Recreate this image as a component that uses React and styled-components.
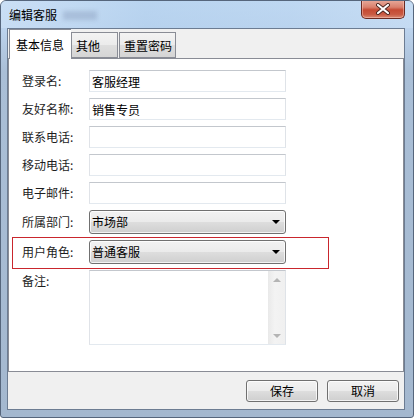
import React from 'react'
import styled, { createGlobalStyle } from 'styled-components'

const GlobalStyle = createGlobalStyle`
    html, body {
        margin: 0;
        padding: 0;
        background: #ffffff;
    }
    body {
        font-family: "Noto Sans CJK SC", "Microsoft YaHei", sans-serif;
        font-size: 12px;
        color: #1b1b1b;
    }
`

const Window = styled.div`
    width: 414px;
    height: 418px;
    box-sizing: border-box;
    border: 1px solid #56667c;
    border-radius: 6px 6px 3px 3px;
    background: linear-gradient(to bottom, #c4dbf3 0, #bcd3ed 28px, #aabfd7 70px, #a4b8cf 100%);
    display: flex;
    flex-direction: column;
    overflow: hidden;
`

const TitleBar = styled.div`
    height: 27px;
    flex: none;
    display: flex;
    align-items: center;
    padding-left: 8px;
    background: linear-gradient(to right, rgba(205,225,246,.7), rgba(178,208,238,.6) 35%, rgba(184,212,240,.5) 70%, rgba(200,222,245,.7));
`

const Title = styled.span`
    color: #000;
    font-size: 12px;
    line-height: 16px;
    letter-spacing: 0;
`

const Blurred = styled.span`
    width: 34px;
    height: 9px;
    margin-left: 6px;
    margin-top: 2px;
    background: rgba(140, 160, 190, .45);
    filter: blur(2px);
`

const CloseButton = styled.div`
    align-self: flex-start;
    margin: -1px 8px 0 auto;
    width: 44px;
    height: 19px;
    box-sizing: border-box;
    border: 1px solid #6b2a22;
    border-top: none;
    border-radius: 0 0 5px 5px;
    background: linear-gradient(to bottom, #e8ab9c 0%, #d9806d 40%, #c54a33 55%, #c95a43 80%, #d98a74 100%);
    box-shadow: inset 0 0 0 1px rgba(255, 210, 200, .45);
    display: flex;
    align-items: center;
    justify-content: center;
`

const Client = styled.div`
    flex: 1;
    margin: 0 8px 7px 6px;
    border: 1px solid #6c7c92;
    background: #f0f0f0;
    display: flex;
    flex-direction: column;
`

const TabStrip = styled.div`
    height: 29px;
    flex: none;
    display: flex;
    align-items: flex-end;
    padding-left: 1px;
    position: relative;
    z-index: 1;
`

const Tab = styled.div`
    width: ${p => p.$w}px;
    box-sizing: border-box;
    height: ${p => (p.$active ? 30 : 26)}px;
    margin-bottom: ${p => (p.$active ? -1 : 0)}px;
    margin-left: ${p => (p.$gap ? 1 : 0)}px;
    border: 1px solid #898c95;
    border-bottom: ${p => (p.$active ? 'none' : '1px solid #898c95')};
    ${p => (p.$active ? 'border-right: none;' : '')}
    background: ${p => (p.$active
        ? '#ffffff'
        : 'linear-gradient(to bottom, #f3f3f3 0%, #ebebeb 50%, #dedede 51%, #d5d5d5 100%)')};
    padding: ${p => (p.$active ? '7px 0 0 6px' : '5px 0 0 4px')};
    line-height: 16px;
    color: #000;
`

const Panel = styled.div`
    height: 314px;
    flex: none;
    box-sizing: border-box;
    border: 1px solid #898c95;
    background: #ffffff;
    padding: 11px 0 0 4px;
`

const Form = styled.div`
    display: flex;
    flex-direction: column;
    gap: 6px;
`

const Row = styled.div`
    display: flex;
    align-items: ${p => (p.$top ? 'flex-start' : 'center')};
    padding-left: 9px;
`

const HighlightRow = styled(Row)`
    width: 317px;
    box-sizing: border-box;
    border: 1px solid #c9262d;
    margin: -3px 0 -5px -1px;
    padding: 2px 0 4px 9px;
`

const Label = styled.label`
    width: 67px;
    flex: none;
    line-height: 16px;
    color: #1e1e1e;
    padding-top: ${p => (p.$top ? 3 : 0)}px;
`

const TextBox = styled.input`
    width: 197px;
    height: 22px;
    box-sizing: border-box;
    margin: 0;
    border: 1px solid;
    border-color: #c3c7cd #dfe3e8 #e3e9ef #e0e3e8;
    padding: 0 2px;
    font-family: inherit;
    font-size: 12px;
    color: #000;
    background: #fff;
    outline: none;
`

const Select = styled.div`
    width: 197px;
    height: ${p => p.$h}px;
    box-sizing: border-box;
    border: 1px solid #707070;
    border-radius: 3px;
    background: linear-gradient(to bottom, #f2f2f2 0%, #ebebeb 48%, #dddddd 52%, #cfcfcf 100%);
    box-shadow: inset 0 0 0 1px rgba(255, 255, 255, .75);
    display: flex;
    align-items: center;
    justify-content: space-between;
    padding: 0 5px 0 2px;
    color: #000;
    line-height: 16px;
`

const Arrow = styled.span`
    width: 0;
    height: 0;
    border-left: 4px solid transparent;
    border-right: 4px solid transparent;
    border-top: 4px solid #000;
`

const Memo = styled.div`
    width: 197px;
    height: 75px;
    box-sizing: border-box;
    border: 1px solid;
    border-color: #c3c7cd #dfe3e8 #e3e9ef #e0e3e8;
    background: #fff;
    display: flex;
    justify-content: flex-end;
`

const ScrollTrack = styled.div`
    width: 17px;
    height: 100%;
    background: linear-gradient(to right, #e9e9e9, #f3f3f3 40%, #f0f0f0);
    display: flex;
    flex-direction: column;
    align-items: center;
    justify-content: space-between;
    padding: 7px 0 6px;
    box-sizing: border-box;
`

const ScrollArrow = styled.span`
    width: 0;
    height: 0;
    border-left: 4px solid transparent;
    border-right: 4px solid transparent;
    ${p => (p.$up ? 'border-bottom' : 'border-top')}: 4px solid #b4b4b4;
`

const Footer = styled.div`
    flex: 1;
    display: flex;
    justify-content: flex-end;
    align-items: flex-start;
    gap: 9px;
    padding: 8px 5px 0 0;
`

const Button = styled.button`
    width: 72px;
    height: 22px;
    margin: 0;
    padding: 0;
    border: 1px solid #707070;
    border-radius: 3px;
    background: linear-gradient(to bottom, #f2f2f2 0%, #ebebeb 48%, #dddddd 52%, #cfcfcf 100%);
    box-shadow: inset 0 0 0 1px rgba(255, 255, 255, .75);
    font-family: inherit;
    font-size: 12px;
    color: #000;
    line-height: 16px;
`

const fields = [
    { label: '登录名:', value: '客服经理' },
    { label: '友好名称:', value: '销售专员' },
    { label: '联系电话:', value: '' },
    { label: '移动电话:', value: '' },
    { label: '电子邮件:', value: '' },
]

export default function App() {
    return (
        <React.Fragment>
            <GlobalStyle />
            <Window>
                <TitleBar>
                    <Title>编辑客服</Title>
                    <Blurred />
                    <CloseButton>
                        <svg width="16" height="12" viewBox="0 0 16 12">
                            <path d="M3 2 L13 10 M13 2 L3 10" stroke="#4a2520" strokeWidth="4" strokeLinecap="round" />
                            <path d="M3 2 L13 10 M13 2 L3 10" stroke="#ffffff" strokeWidth="2.2" strokeLinecap="round" />
                        </svg>
                    </CloseButton>
                </TitleBar>
                <Client>
                    <TabStrip>
                        <Tab $active $w={62}>基本信息</Tab>
                        <Tab $w={47}>其他</Tab>
                        <Tab $gap $w={57}>重置密码</Tab>
                    </TabStrip>
                    <Panel>
                        <Form>
                            {fields.map(f => (
                                <Row key={f.label}>
                                    <Label>{f.label}</Label>
                                    <TextBox defaultValue={f.value} readOnly />
                                </Row>
                            ))}
                            <Row>
                                <Label>所属部门:</Label>
                                <Select $h={24}>
                                    市场部
                                    <Arrow />
                                </Select>
                            </Row>
                            <HighlightRow>
                                <Label>用户角色:</Label>
                                <Select $h={24}>
                                    普通客服
                                    <Arrow />
                                </Select>
                            </HighlightRow>
                            <Row $top>
                                <Label $top>备注:</Label>
                                <Memo>
                                    <ScrollTrack>
                                        <ScrollArrow $up />
                                        <ScrollArrow />
                                    </ScrollTrack>
                                </Memo>
                            </Row>
                        </Form>
                    </Panel>
                    <Footer>
                        <Button>保存</Button>
                        <Button>取消</Button>
                    </Footer>
                </Client>
            </Window>
        </React.Fragment>
    )
}
